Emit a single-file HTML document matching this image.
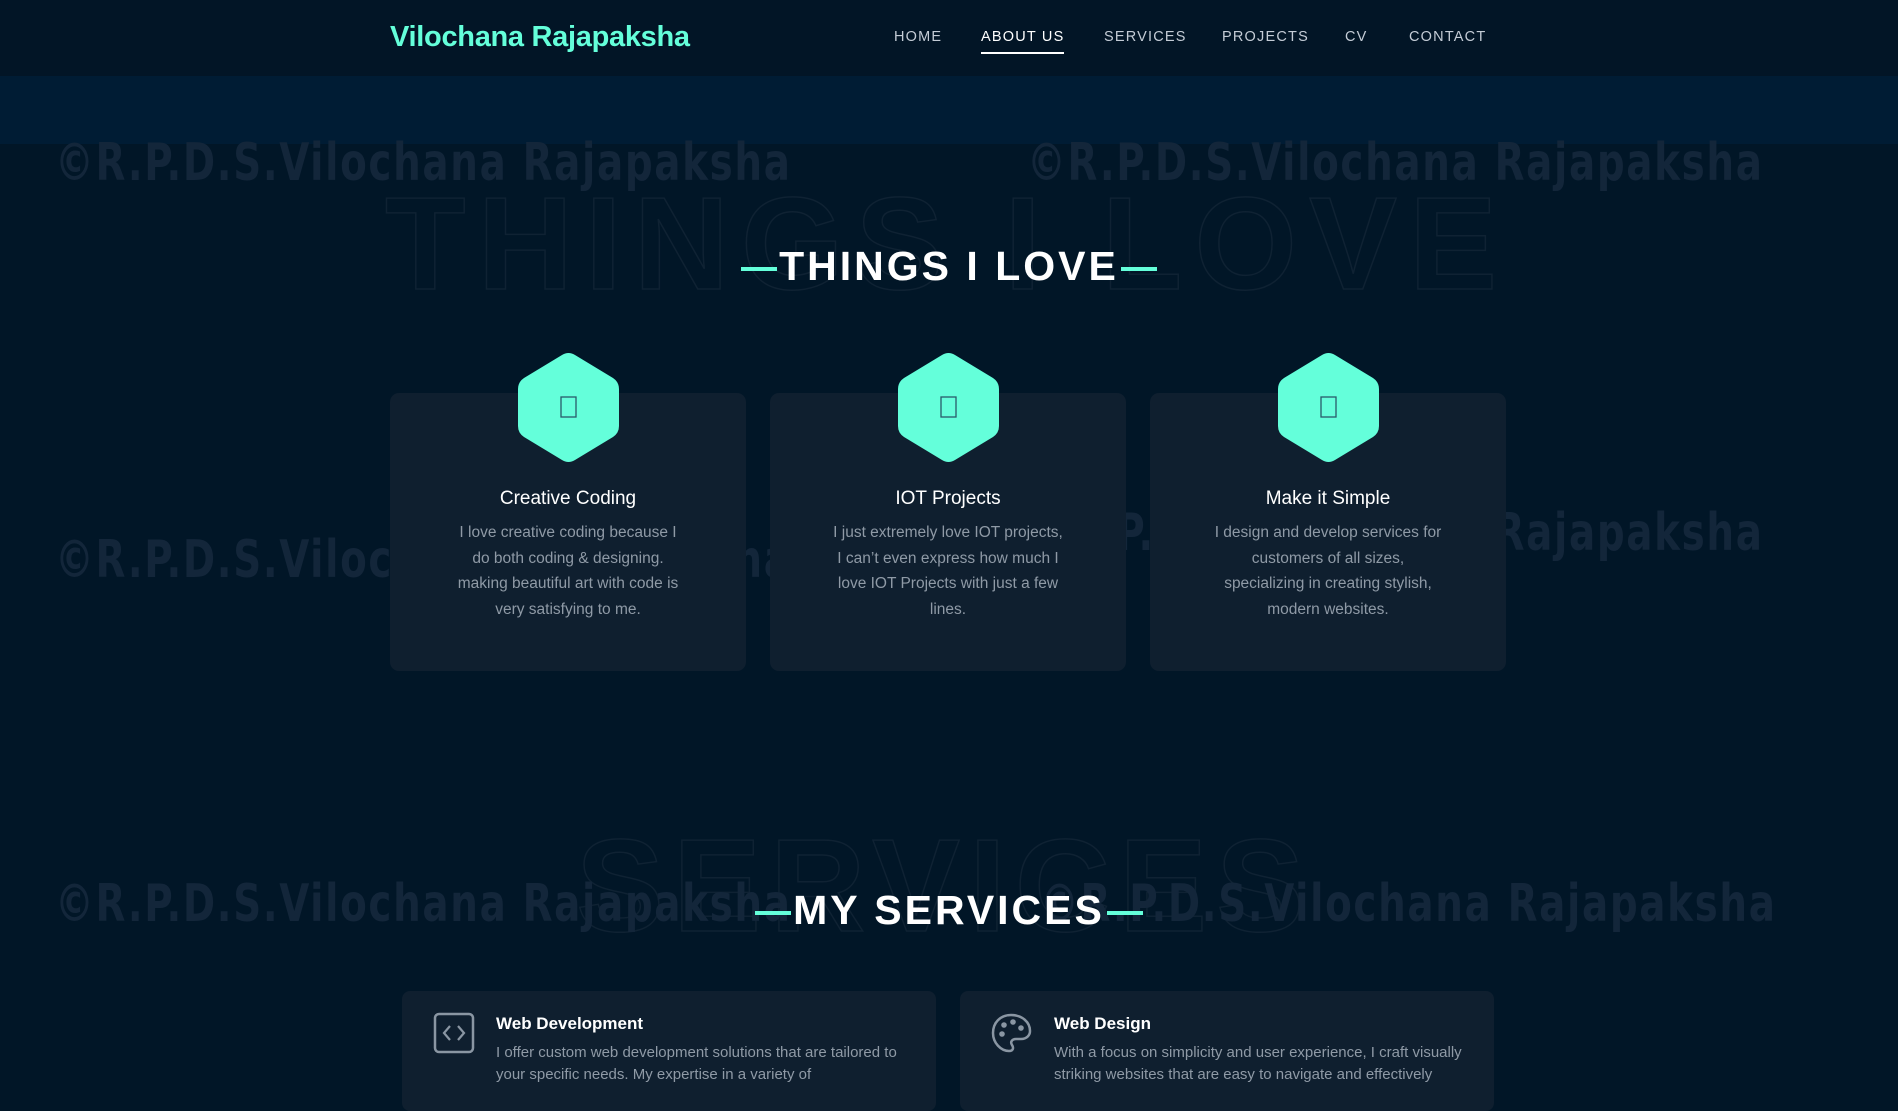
<!DOCTYPE html>
<html><head><meta charset="utf-8"><style>
*{margin:0;padding:0;box-sizing:border-box}
body{width:1898px;height:1078px;overflow:hidden;background:#011627;font-family:"Liberation Sans",sans-serif;position:relative}
.hdr{position:absolute;left:0;top:0;width:1898px;height:76px;background:#021526}
.logo{position:absolute;left:390px;top:21px;font-size:29px;font-weight:bold;color:#64ffda;letter-spacing:-0.3px}
.nav a{position:absolute;top:29px;font-size:14.5px;color:#c4ccd6;letter-spacing:1.2px;text-decoration:none}
.nav a.act{color:#fff}
.ul{position:absolute;left:981px;top:52px;width:83px;height:2px;background:#fff}
.band{position:absolute;left:0;top:76px;width:1898px;height:68px;background:#001c34}
.wm{position:absolute;font-family:"DejaVu Sans Condensed","DejaVu Sans",sans-serif;font-weight:bold;font-size:52px;color:#13263a;white-space:nowrap;transform-origin:0 0;transform:scaleX(0.83);letter-spacing:2px}
.out{position:absolute;font-weight:bold;color:transparent;-webkit-text-stroke:1.5px #0f2233;white-space:nowrap}
.ttl{position:absolute;left:0;width:1898px;text-align:center;font-size:41px;font-weight:bold;color:#fff;letter-spacing:3px}
.ttl span{display:inline-block;width:36px;height:4px;background:#64ffda;vertical-align:middle;margin:0 2px}
.card{position:absolute;top:393px;width:356px;height:278px;background:#0f1f2f;border-radius:9px}
.hex{position:absolute;top:352px;width:101px;height:111px}
.ct{position:absolute;top:488px;width:356px;text-align:center;color:#fff;font-size:19px}
.cd{position:absolute;top:520px;width:356px;text-align:center;color:#8f9aa6;font-size:15.5px;line-height:25.6px;padding:0 62px}
.sc{position:absolute;top:991px;width:534px;height:120px;background:#0f1f2f;border-radius:8px}
.st{position:absolute;top:1014px;color:#fff;font-size:17px;font-weight:bold}
.sd{position:absolute;top:1042px;color:#8f9aa6;font-size:15px;line-height:22px;width:420px}
</style></head><body>
<div class="hdr"></div>
<div class="logo">Vilochana Rajapaksha</div>
<div class="nav">
<a style="left:894px">HOME</a><a class="act" style="left:981px">ABOUT US</a><a style="left:1104px">SERVICES</a><a style="left:1222px">PROJECTS</a><a style="left:1345px">CV</a><a style="left:1409px">CONTACT</a>
</div>
<div class="ul"></div>
<div class="band"></div>

<div class="out" style="left:385px;top:168px;font-size:132px;letter-spacing:12px">THINGS I LOVE</div>
<div class="out" style="left:576px;top:810px;font-size:132px;letter-spacing:9px">SERVICES</div>

<div class="wm" style="left:55px;top:133px">©R.P.D.S.Vilochana Rajapaksha</div>
<div class="wm" style="left:1027px;top:133px">©R.P.D.S.Vilochana Rajapaksha</div>
<div class="wm" style="left:55px;top:530px">©R.P.D.S.Vilochana Rajapaksha</div>
<div class="wm" style="left:1027px;top:503px">©R.P.D.S.Vilochana Rajapaksha</div>
<div class="wm" style="left:55px;top:874px">©R.P.D.S.Vilochana Rajapaksha</div>
<div class="wm" style="left:1040px;top:874px">©R.P.D.S.Vilochana Rajapaksha</div>

<div class="ttl" style="top:243px"><span></span>THINGS I LOVE<span></span></div>

<div class="card" style="left:390px"></div>
<div class="card" style="left:770px"></div>
<div class="card" style="left:1150px"></div>

<svg class="hex" style="left:518px" viewBox="0 0 101 111"><path d="M44 3Q50.5 -1 57 3L95 26Q101 30 101 37V74Q101 81 95 85L57 108Q50.5 112 44 108L6 85Q0 81 0 74V37Q0 30 6 26Z" fill="#64ffda"/><rect x="43" y="45" width="15" height="20" fill="none" stroke="#2a5a6a" stroke-width="1.3"/></svg>
<svg class="hex" style="left:898px" viewBox="0 0 101 111"><path d="M44 3Q50.5 -1 57 3L95 26Q101 30 101 37V74Q101 81 95 85L57 108Q50.5 112 44 108L6 85Q0 81 0 74V37Q0 30 6 26Z" fill="#64ffda"/><rect x="43" y="45" width="15" height="20" fill="none" stroke="#2a5a6a" stroke-width="1.3"/></svg>
<svg class="hex" style="left:1278px" viewBox="0 0 101 111"><path d="M44 3Q50.5 -1 57 3L95 26Q101 30 101 37V74Q101 81 95 85L57 108Q50.5 112 44 108L6 85Q0 81 0 74V37Q0 30 6 26Z" fill="#64ffda"/><rect x="43" y="45" width="15" height="20" fill="none" stroke="#2a5a6a" stroke-width="1.3"/></svg>

<div class="ct" style="left:390px">Creative Coding</div>
<div class="ct" style="left:770px">IOT Projects</div>
<div class="ct" style="left:1150px">Make it Simple</div>
<div class="cd" style="left:390px">I love creative coding because I do both coding &amp; designing. making beautiful art with code is very satisfying to me.</div>
<div class="cd" style="left:770px">I just extremely love IOT projects, I can’t even express how much I love IOT Projects with just a few lines.</div>
<div class="cd" style="left:1150px">I design and develop services for customers of all sizes, specializing in creating stylish, modern websites.</div>

<div class="ttl" style="top:887px"><span></span>MY SERVICES<span></span></div>

<div class="sc" style="left:402px"></div>
<div class="sc" style="left:960px"></div>
<svg style="position:absolute;left:433px;top:1012px" width="42" height="42" viewBox="0 0 42 42"><rect x="2" y="2" width="38" height="38" rx="4" fill="none" stroke="#8a96a3" stroke-width="2.5"/><path d="M17 14l-6 7 6 7M25 14l6 7-6 7" fill="none" stroke="#8a96a3" stroke-width="2.2"/></svg>
<svg style="position:absolute;left:990px;top:1012px" width="42" height="42" viewBox="0 0 42 42"><path d="M21 3C10 3 3 11 3 21s8 18 16 18c4 0 5-3 3-6-2-3 0-6 4-6h5c6 0 9-4 9-8C40 10 32 3 21 3z" fill="none" stroke="#8a96a3" stroke-width="2.5"/><circle cx="12" cy="22" r="2.8" fill="#8a96a3"/><circle cx="14" cy="13" r="2.8" fill="#8a96a3"/><circle cx="23" cy="10" r="2.8" fill="#8a96a3"/><circle cx="31" cy="16" r="2.8" fill="#8a96a3"/></svg>
<div class="st" style="left:496px">Web Development</div>
<div class="sd" style="left:496px">I offer custom web development solutions that are tailored to your specific needs. My expertise in a variety of</div>
<div class="st" style="left:1054px">Web Design</div>
<div class="sd" style="left:1054px">With a focus on simplicity and user experience, I craft visually striking websites that are easy to navigate and effectively</div>
</body></html>
